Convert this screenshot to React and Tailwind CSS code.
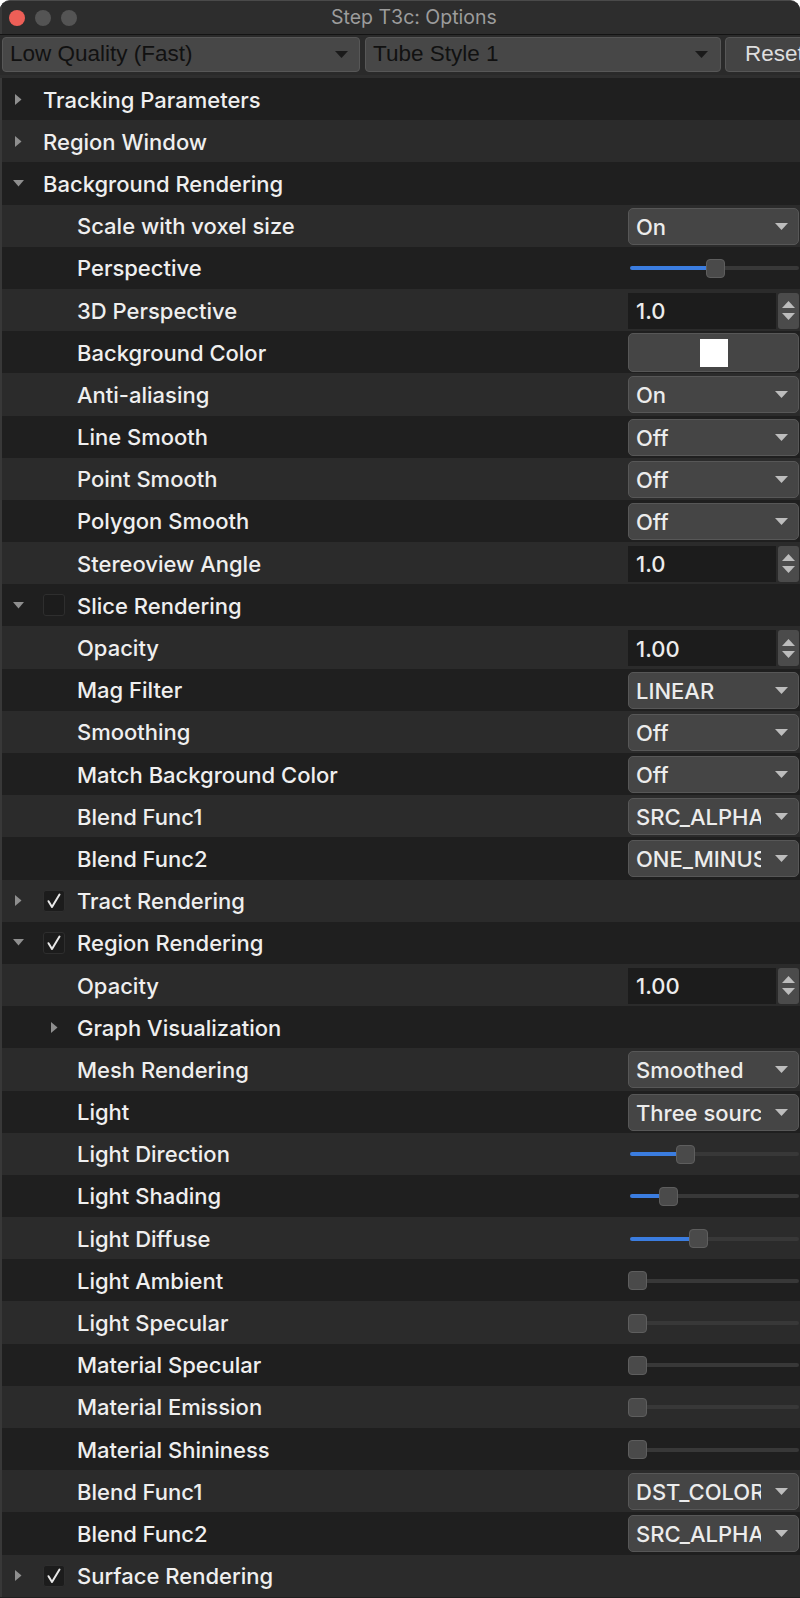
import React from "react";

const rows = [
  { kind: "group", level: 0, label: "Tracking Parameters", open: false },
  { kind: "group", level: 0, label: "Region Window", open: false },
  { kind: "group", level: 0, label: "Background Rendering", open: true },
  { label: "Scale with voxel size", ctrl: "combo", value: "On" },
  { label: "Perspective", ctrl: "slider", pos: 78 },
  { label: "3D Perspective", ctrl: "spin", value: "1.0" },
  { label: "Background Color", ctrl: "color" },
  { label: "Anti-aliasing", ctrl: "combo", value: "On" },
  { label: "Line Smooth", ctrl: "combo", value: "Off" },
  { label: "Point Smooth", ctrl: "combo", value: "Off" },
  { label: "Polygon Smooth", ctrl: "combo", value: "Off" },
  { label: "Stereoview Angle", ctrl: "spin", value: "1.0" },
  { kind: "group", level: 0, label: "Slice Rendering", open: true, check: false },
  { label: "Opacity", ctrl: "spin", value: "1.00" },
  { label: "Mag Filter", ctrl: "combo", value: "LINEAR" },
  { label: "Smoothing", ctrl: "combo", value: "Off" },
  { label: "Match Background Color", ctrl: "combo", value: "Off" },
  { label: "Blend Func1", ctrl: "combo", value: "SRC_ALPHA" },
  { label: "Blend Func2", ctrl: "combo", value: "ONE_MINUS_SRC_ALPHA" },
  { kind: "group", level: 0, label: "Tract Rendering", open: false, check: true },
  { kind: "group", level: 0, label: "Region Rendering", open: true, check: true },
  { label: "Opacity", ctrl: "spin", value: "1.00" },
  { kind: "group", level: 1, label: "Graph Visualization", open: false },
  { label: "Mesh Rendering", ctrl: "combo", value: "Smoothed" },
  { label: "Light", ctrl: "combo", value: "Three sources" },
  { label: "Light Direction", ctrl: "slider", pos: 48 },
  { label: "Light Shading", ctrl: "slider", pos: 31 },
  { label: "Light Diffuse", ctrl: "slider", pos: 61 },
  { label: "Light Ambient", ctrl: "slider", pos: 0 },
  { label: "Light Specular", ctrl: "slider", pos: 0 },
  { label: "Material Specular", ctrl: "slider", pos: 0 },
  { label: "Material Emission", ctrl: "slider", pos: 0 },
  { label: "Material Shininess", ctrl: "slider", pos: 0 },
  { label: "Blend Func1", ctrl: "combo", value: "DST_COLOR" },
  { label: "Blend Func2", ctrl: "combo", value: "SRC_ALPHA" },
  { kind: "group", level: 0, label: "Surface Rendering", open: false, check: true },
];

function Arrow({ open, className = "" }) {
  return open ? (
    <svg width="11" height="7" viewBox="0 0 11 7" className={className}>
      <path d="M0 0 L11 0 L5.5 6.5 Z" fill="#8f8f8f" />
    </svg>
  ) : (
    <svg width="7" height="11" viewBox="0 0 7 11" className={className}>
      <path d="M0 0 L6.5 5.5 L0 11 Z" fill="#8f8f8f" />
    </svg>
  );
}

function Check({ checked }) {
  return (
    <div className="w-[22px] h-[22px] rounded-[3px] bg-[#1c1c1c] border border-[#2e2e2e] flex items-center justify-center shrink-0">
      {checked && (
        <svg width="16" height="16" viewBox="0 0 16 16">
          <path d="M2.5 8.2 L6 14 L13.5 1.5" fill="none" stroke="#e8e8e8" strokeWidth="2" strokeLinecap="round" strokeLinejoin="round" />
        </svg>
      )}
    </div>
  );
}

function Combo({ value }) {
  return (
    <div className="h-[37px] w-full rounded-[5px] bg-[#454545] border border-[#575757] flex items-center pl-[7px] pr-[10px]">
      <div className="w-[125px] overflow-hidden whitespace-nowrap text-[#ececec] text-[22px] font-medium leading-none pt-[1px]">{value}</div>
      <svg width="13" height="7" viewBox="0 0 13 7" className="ml-auto">
        <path d="M0 0 L13 0 L6.5 7 Z" fill="#bdbdbd" />
      </svg>
    </div>
  );
}

function Slider({ pos }) {
  return (
    <div className="h-[20px] w-full flex items-center">
      {pos > 0 && <div className="h-[4px] ml-[2px] bg-[#3b7de0] rounded-l-[2px]" style={{ width: pos - 2 }} />}
      <div className="w-[19px] h-[19px] rounded-[4px] bg-[#4a4a4a] border border-[#5e5e5e] shrink-0" />
      <div className="h-[4px] flex-1 bg-[#383838] rounded-r-[2px]" />
    </div>
  );
}

function Spin({ value }) {
  return (
    <div className="h-[36px] w-full flex items-stretch">
      <div className="flex-1 bg-[#1c1c1c] flex items-center pl-[8px] pt-[1px] text-[#ececec] text-[22px] font-medium leading-none">{value}</div>
      <div className="w-[21px] ml-[2px] bg-[#4b4b4b] rounded-[3px] flex flex-col items-center justify-center gap-[5px]">
        <svg width="13" height="7" viewBox="0 0 13 7"><path d="M0 7 L13 7 L6.5 0 Z" fill="#bcbcbc" /></svg>
        <svg width="13" height="7" viewBox="0 0 13 7"><path d="M0 0 L13 0 L6.5 7 Z" fill="#bcbcbc" /></svg>
      </div>
    </div>
  );
}

function ColorBtn() {
  return (
    <div className="h-[39px] w-full rounded-[5px] bg-[#454545] border border-[#575757] flex items-center justify-center">
      <div className="w-[28px] h-[28px] bg-white" />
    </div>
  );
}

function Row({ r, i }) {
  const bg = i % 2 === 0 ? "bg-[#1f1f1f]" : "bg-[#2b2b2b]";
  if (r.kind === "group") {
    return (
      <div className={`h-[42.2px] flex items-center ${bg}`}>
        {r.level === 0 ? (
          <div className="w-[33px] flex justify-center">
            <Arrow open={r.open} />
          </div>
        ) : (
          <div className="w-[75px] flex justify-end pr-[19px]">
            <Arrow open={r.open} />
          </div>
        )}
        {r.level === 0 && <div className="w-[8px]" />}
        {r.check !== undefined && (
          <div className="w-[34px] flex">
            <Check checked={r.check} />
          </div>
        )}
        <div className="text-[#efefef] text-[22px] font-medium leading-none whitespace-nowrap pt-[1px]">{r.label}</div>
      </div>
    );
  }
  return (
    <div className={`h-[42.2px] flex items-center ${bg}`}>
      <div className="pl-[75px] text-[#efefef] text-[22px] font-medium leading-none whitespace-nowrap pt-[1px]">{r.label}</div>
      <div className="ml-auto mr-[1px] w-[171px] flex items-center pt-[1px]">
        {r.ctrl === "combo" && <Combo value={r.value} />}
        {r.ctrl === "slider" && <Slider pos={r.pos} />}
        {r.ctrl === "spin" && <Spin value={r.value} />}
        {r.ctrl === "color" && <ColorBtn />}
      </div>
    </div>
  );
}

export default function App() {
  return (
    <div className="w-[800px] h-[1598px] overflow-hidden bg-[#1f1f1f] font-['Inter',sans-serif] flex flex-col rounded-t-[10px] border-t border-[#4a4a4a]">
      <div className="h-[33px] bg-[#2d2d2d] flex items-center relative shrink-0 border-l-2 border-[#3a3a3a]">
        <div className="flex items-center gap-[10px] pl-[7px]">
          <div className="w-[16px] h-[16px] rounded-full bg-[#ed5f57]" />
          <div className="w-[16px] h-[16px] rounded-full bg-[#545454]" />
          <div className="w-[16px] h-[16px] rounded-full bg-[#545454]" />
        </div>
        <div className="ml-[254px] text-[#9c9c9c] text-[19.5px] leading-none whitespace-nowrap">Step T3c: Options</div>
      </div>
      <div className="h-[1px] bg-[#141414] shrink-0" />
      <div className="h-[43px] bg-[#2a2a2a] flex items-start pt-[2px] shrink-0 border-b-[3px] border-[#2e2e2e] font-['Liberation_Sans',sans-serif]">
        <div className="ml-[2px] w-[358px] h-[35px] shrink-0 rounded-[4px] bg-[#474747] border border-[#575757] flex items-center pl-[7px] pr-[11px]">
          <span className="text-[#111] text-[22.5px] leading-none">Low Quality (Fast)</span>
          <svg width="13" height="7" viewBox="0 0 13 7" className="ml-auto"><path d="M0 0 L13 0 L6.5 7 Z" fill="#1a1a1a" /></svg>
        </div>
        <div className="ml-[5px] w-[356px] h-[35px] shrink-0 rounded-[4px] bg-[#474747] border border-[#575757] flex items-center pl-[7px] pr-[12px]">
          <span className="text-[#111] text-[22.5px] leading-none">Tube Style 1</span>
          <svg width="13" height="7" viewBox="0 0 13 7" className="ml-auto"><path d="M0 0 L13 0 L6.5 7 Z" fill="#1a1a1a" /></svg>
        </div>
        <div className="ml-[4px] w-[100px] h-[35px] shrink-0 rounded-[4px] bg-[#444444] border border-[#575757] flex items-center pl-[19px]">
          <span className="text-[#dedede] text-[22.5px] leading-none">Reset</span>
        </div>
      </div>
      <div className="flex flex-col border-l-2 border-[#383838]">
        {rows.map((r, i) => (
          <Row key={i} r={r} i={i} />
        ))}
      </div>
    </div>
  );
}
